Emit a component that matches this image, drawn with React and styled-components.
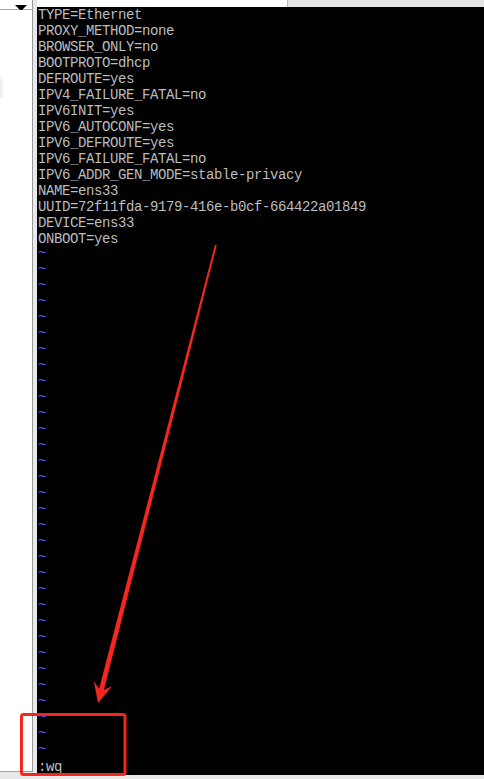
import styled, { createGlobalStyle } from "styled-components";

const GlobalStyle = createGlobalStyle`
html, body {
margin: 0;
padding: 0;
background: #e8e8e8;
}
`

const Page = styled.div`
position: relative;
width: 484px;
height: 779px;
display: flex;
flex-direction: column;
overflow: hidden;
background: #e8e8e8;
`

const Main = styled.div`
display: flex;
height: 775px;
`

const LeftColumn = styled.div`
width: 33px;
display: flex;
flex-direction: column;
padding-bottom: 3px;
`

const Dropdown = styled.div`
height: 10px;
box-sizing: border-box;
background: #fff;
border-right: 1px solid #9a9a9a;
border-bottom: 1px solid #a8a8a8;
display: flex;
justify-content: flex-end;
padding: 5px 5px 0 0;
`

const DropArrow = styled.div`
width: 0;
height: 0;
border-left: 6px solid transparent;
border-right: 6px solid transparent;
border-top: 6px solid #000;
`

const List = styled.div`
flex: 1;
background: #fff;
border-right: 1px solid #9a9a9a;
border-bottom: 1px solid #a0a0a0;
padding-top: 67px;
`

const ListItem = styled.div`
width: 3px;
height: 21px;
background: #eef2f2;
`

const Gutter = styled.div`
width: 4px;
background: #e8e8e8;
`

const RightColumn = styled.div`
flex: 1;
display: flex;
flex-direction: column;
`

const TopStrip = styled.div`
height: 7px;
display: flex;
`

const TabWhite = styled.div`
width: 250px;
background: #fff;
border-right: 1px solid #b8b8b8;
`

const TabGray = styled.div`
flex: 1;
background: #e4e4e4;
`

const Terminal = styled.div`
flex: 1;
background: #000;
padding-left: 1px;
font-family: "Liberation Mono", "DejaVu Sans Mono", monospace;
font-size: 14px;
letter-spacing: -0.4px;
line-height: 16px;
white-space: pre;
`

const Line = styled.div`
height: 16px;
color: #bdbdbd;
`

// vim draws the empty-line tilde high in its cell
const TildeLine = styled.div`
height: 16px;
line-height: 12px;
color: #5f5fff;
`

const Overlay = styled.svg`
position: absolute;
left: 0;
top: 0;
pointer-events: none;
`

const config = [
    "TYPE=Ethernet",
    "PROXY_METHOD=none",
    "BROWSER_ONLY=no",
    "BOOTPROTO=dhcp",
    "DEFROUTE=yes",
    "IPV4_FAILURE_FATAL=no",
    "IPV6INIT=yes",
    "IPV6_AUTOCONF=yes",
    "IPV6_DEFROUTE=yes",
    "IPV6_FAILURE_FATAL=no",
    "IPV6_ADDR_GEN_MODE=stable-privacy",
    "NAME=ens33",
    "UUID=72f11fda-9179-416e-b0cf-664422a01849",
    "DEVICE=ens33",
    "ONBOOT=yes",
]

const TILDES = 32

export default function App() {
    const tildes = Array.from({ length: TILDES }, (_, i) => i)

    return (
        <Page>
            <GlobalStyle />
            <Main>
                <LeftColumn>
                    <Dropdown>
                        <DropArrow />
                    </Dropdown>
                    <List>
                        <ListItem />
                    </List>
                </LeftColumn>
                <Gutter />
                <RightColumn>
                    <TopStrip>
                        <TabWhite />
                        <TabGray />
                    </TopStrip>
                    <Terminal>
                        {config.map(line => (
                            <Line key={line}>{line}</Line>
                        ))}
                        {tildes.map(i => (
                            <TildeLine key={"t" + i}>~</TildeLine>
                        ))}
                        <Line>:wq</Line>
                    </Terminal>
                </RightColumn>
            </Main>
            <Overlay width="484" height="779" viewBox="0 0 484 779">
                <polygon
                    fill="#f5261e"
                    points="214.9,244.8 216.7,245.3 103.9,690 112.2,686 98,703 93.8,681.2 99.1,688.8"
                />
                <rect x="21.5" y="714.5" width="103.5" height="60" rx="2"
                    fill="none" stroke="#f5261e" strokeWidth="3" />
            </Overlay>
        </Page>
    )
}
